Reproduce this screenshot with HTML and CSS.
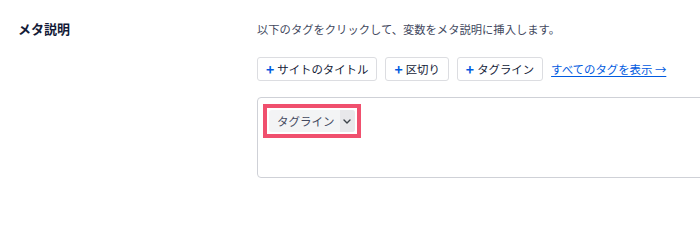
FILE: index.html
```html
<!DOCTYPE html>
<html lang="ja">
<head>
<meta charset="utf-8">
<title>メタ説明</title>
<link rel="stylesheet" href="styles.css">
</head>
<body>
<div class="row">
  <div class="label">メタ説明</div>
  <div class="field">
    <p class="desc">以下のタグをクリックして、変数をメタ説明に挿入します。</p>
    <div class="tags">
      <button class="btn"><span class="plus">+</span>サイトのタイトル</button>
      <button class="btn"><span class="plus">+</span>区切り</button>
      <button class="btn"><span class="plus">+</span>タグライン</button>
      <a class="all" href="#">すべてのタグを表示 →</a>
    </div>
    <div class="editor">
      <span class="highlight">
        <span class="chip"><span class="chip-text">タグライン</span><span class="chip-drop"><svg width="8" height="5" viewBox="0 0 8 5"><path d="M1 1 L4 4 L7 1" fill="none" stroke="#3c434a" stroke-width="1.4" stroke-linecap="round" stroke-linejoin="round"/></svg></span></span>
      </span>
    </div>
  </div>
</div>
</body>
</html>
```

FILE: styles.css
```css
html, body {
  margin: 0;
  padding: 0;
  background: #ffffff;
  overflow: hidden;
}
body {
  width: 700px;
  height: 207px;
  font-family: "Noto Sans CJK JP", "Noto Sans", sans-serif;
  color: #141b38;
}
.row {
  display: flex;
  padding-top: 19px;
}
.label {
  width: 239px;
  padding-left: 18px;
  flex: none;
  font-size: 13px;
  font-weight: 700;
  line-height: 20px;
  color: #141b38;
}
.field {
  flex: none;
  width: 443px;
  overflow: hidden;
}
.desc {
  margin: 0;
  font-size: 11.3px;
  line-height: 20px;
  color: #434960;
}
.tags {
  display: flex;
  align-items: center;
  gap: 8px;
  margin-top: 18px;
}
.btn {
  display: inline-flex;
  align-items: center;
  height: 24px;
  box-sizing: border-box;
  padding: 0 8px 0 8px;
  border: 1px solid #dcdde1;
  border-radius: 3px;
  background: #ffffff;
  font-family: inherit;
  font-size: 11.4px;
  color: #141b38;
  cursor: pointer;
}
.plus {
  color: #005ae0;
  font-weight: 700;
  font-size: 14px;
  margin-right: 3px;
  line-height: 1;
}
.all {
  font-size: 11.4px;
  color: #005ae0;
  text-decoration: underline;
  text-underline-offset: 2px;
}
.editor {
  margin-top: 16px;
  width: 470px;
  height: 81px;
  box-sizing: border-box;
  border: 1px solid #cfd1d7;
  border-radius: 4px;
  padding: 6px 5px;
}
.highlight {
  display: inline-flex;
  border: 4px solid #f0506e;
  padding: 2px;
}
.chip {
  display: inline-flex;
  height: 22px;
  background: #f3f4f5;
  border-radius: 3px;
  overflow: hidden;
}
.chip-text {
  display: flex;
  align-items: center;
  padding: 0 5px 0 8px;
  font-size: 11.5px;
  color: #434960;
}
.chip-drop {
  display: flex;
  align-items: center;
  justify-content: center;
  width: 15px;
  background: #e8e8eb;
}
```
